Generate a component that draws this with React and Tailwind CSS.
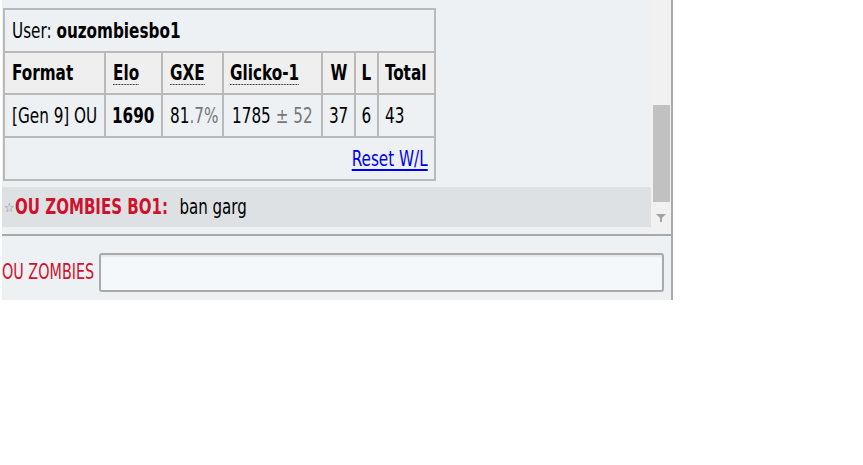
import React from "react";

const font = "font-['DejaVu_Sans_Condensed','DejaVu_Sans',sans-serif]";

// narrow text: the reference is squeezed horizontally
function Sq({ children, className = "" }) {
  return (
    <span className={`inline-block whitespace-nowrap [transform:scaleX(0.77)] ${className}`}>
      {children}
    </span>
  );
}

const dotted = "underline decoration-dotted decoration-1 underline-offset-[4px]";

export default function App() {
  return (
    <div className={`w-[863px] h-[465px] bg-white ${font}`}>
      <div className="ml-[2px] w-[671px] h-[300px] flex flex-col bg-[#edf1f4] border-r-2 border-[#aaaaaa]">
        {/* chat log + scrollbar */}
        <div className="flex h-[234px]">
          <div className="flex-1 flex flex-col">
            {/* ranking table */}
            <div className="mt-[8px] ml-[1px] w-[433px] grid grid-cols-[99px_55px_59px_97px_31px_21px_55px] gap-[2px] p-[2px] bg-[#b9b9b9] text-[22px] text-black leading-none">
              <div className="col-span-7 h-[41px] flex items-center pl-[7px] bg-[#edf1f4]">
                <Sq className="origin-left">
                  User: <strong>ouzombiesbo1</strong>
                </Sq>
              </div>

              <div className="h-[40px] flex items-center pl-[7px] bg-[#efefef] font-bold">
                <Sq className="origin-left">Format</Sq>
              </div>
              <div className="h-[40px] flex items-center pl-[7px] bg-[#efefef] font-bold">
                <Sq className={`origin-left ${dotted}`}>Elo</Sq>
              </div>
              <div className="h-[40px] flex items-center pl-[7px] bg-[#efefef] font-bold">
                <Sq className={`origin-left ${dotted}`}>GXE</Sq>
              </div>
              <div className="h-[40px] flex items-center pl-[6px] bg-[#efefef] font-bold">
                <Sq className={`origin-left ${dotted}`}>Glicko-1</Sq>
              </div>
              <div className="h-[40px] flex items-center justify-center bg-[#efefef] font-bold">
                <Sq>W</Sq>
              </div>
              <div className="h-[40px] flex items-center justify-center bg-[#efefef] font-bold">
                <Sq>L</Sq>
              </div>
              <div className="h-[40px] flex items-center pl-[6px] bg-[#efefef] font-bold">
                <Sq className="origin-left">Total</Sq>
              </div>

              <div className="h-[41px] flex items-center pl-[7px] bg-[#edf1f4]">
                <Sq className="origin-left">[Gen 9] OU</Sq>
              </div>
              <div className="h-[41px] flex items-center pl-[6px] bg-[#edf1f4] font-bold">
                <Sq className="origin-left">1690</Sq>
              </div>
              <div className="h-[41px] flex items-center pl-[7px] bg-[#edf1f4]">
                <Sq className="origin-left">
                  81<span className="text-[#777777]">.7%</span>
                </Sq>
              </div>
              <div className="h-[41px] flex items-center justify-center bg-[#edf1f4]">
                <Sq>
                  1785<span className="text-[#777777]"> ± 52</span>
                </Sq>
              </div>
              <div className="h-[41px] flex items-center justify-center bg-[#edf1f4]">
                <Sq>37</Sq>
              </div>
              <div className="h-[41px] flex items-center justify-center bg-[#edf1f4]">
                <Sq>6</Sq>
              </div>
              <div className="h-[41px] flex items-center pl-[6px] bg-[#edf1f4]">
                <Sq className="origin-left">43</Sq>
              </div>

              <div className="col-span-7 h-[41px] flex items-center justify-end pr-[6px] bg-[#edf1f4]">
                <Sq className="origin-right">
                  <a href="#" className="text-[#0000ee] underline underline-offset-[3px]">Reset W/L</a>
                </Sq>
              </div>
            </div>

            {/* chat message */}
            <div className="mt-[6px] h-[40px] flex items-center bg-[#dee1e4] leading-none">
              <span className="ml-[2px] w-[11px] text-[13px] text-[#7a7a7a]">☆</span>
              <span className="inline-block whitespace-nowrap origin-left [transform:scaleX(0.76)] text-[22px]">
                <strong className="text-[#d0112b]">OU ZOMBIES BO1:</strong>
                <span className="ml-[15px] text-black">ban garg</span>
              </span>
            </div>
          </div>

          {/* scrollbar */}
          <div className="w-[20px] flex flex-col bg-[#f1f1f1]">
            <div className="mt-[105px] ml-[2px] w-[17px] h-[97px] bg-[#c1c1c1]" />
            <svg className="mt-[12px] ml-[5px]" width="10" height="9" viewBox="0 0 10 9">
              <path d="M0 0 H10 L5 5 Z" fill="#a3a3a3" />
              <rect x="4" y="4" width="2" height="4" fill="#a3a3a3" />
            </svg>
          </div>
        </div>

        <div className="h-[2px] bg-[#a8a8a8]" />

        {/* chat input */}
        <div className="flex-1 flex items-start pt-[17px]">
          <div className="w-[95px] h-[39px] flex items-center overflow-hidden leading-none">
            <span className="inline-block whitespace-nowrap origin-left [transform:scaleX(0.76)] text-[21px] text-[#d0112b]">
              OU ZOMBIES BO1:
            </span>
          </div>
          <input
            type="text"
            className="ml-[2px] w-[565px] h-[39px] rounded-[3px] border-2 border-[#aaaaaa] bg-[#f5f8fb] shadow-[inset_0_2px_2px_rgba(0,0,0,0.06)]"
          />
        </div>
      </div>
    </div>
  );
}
